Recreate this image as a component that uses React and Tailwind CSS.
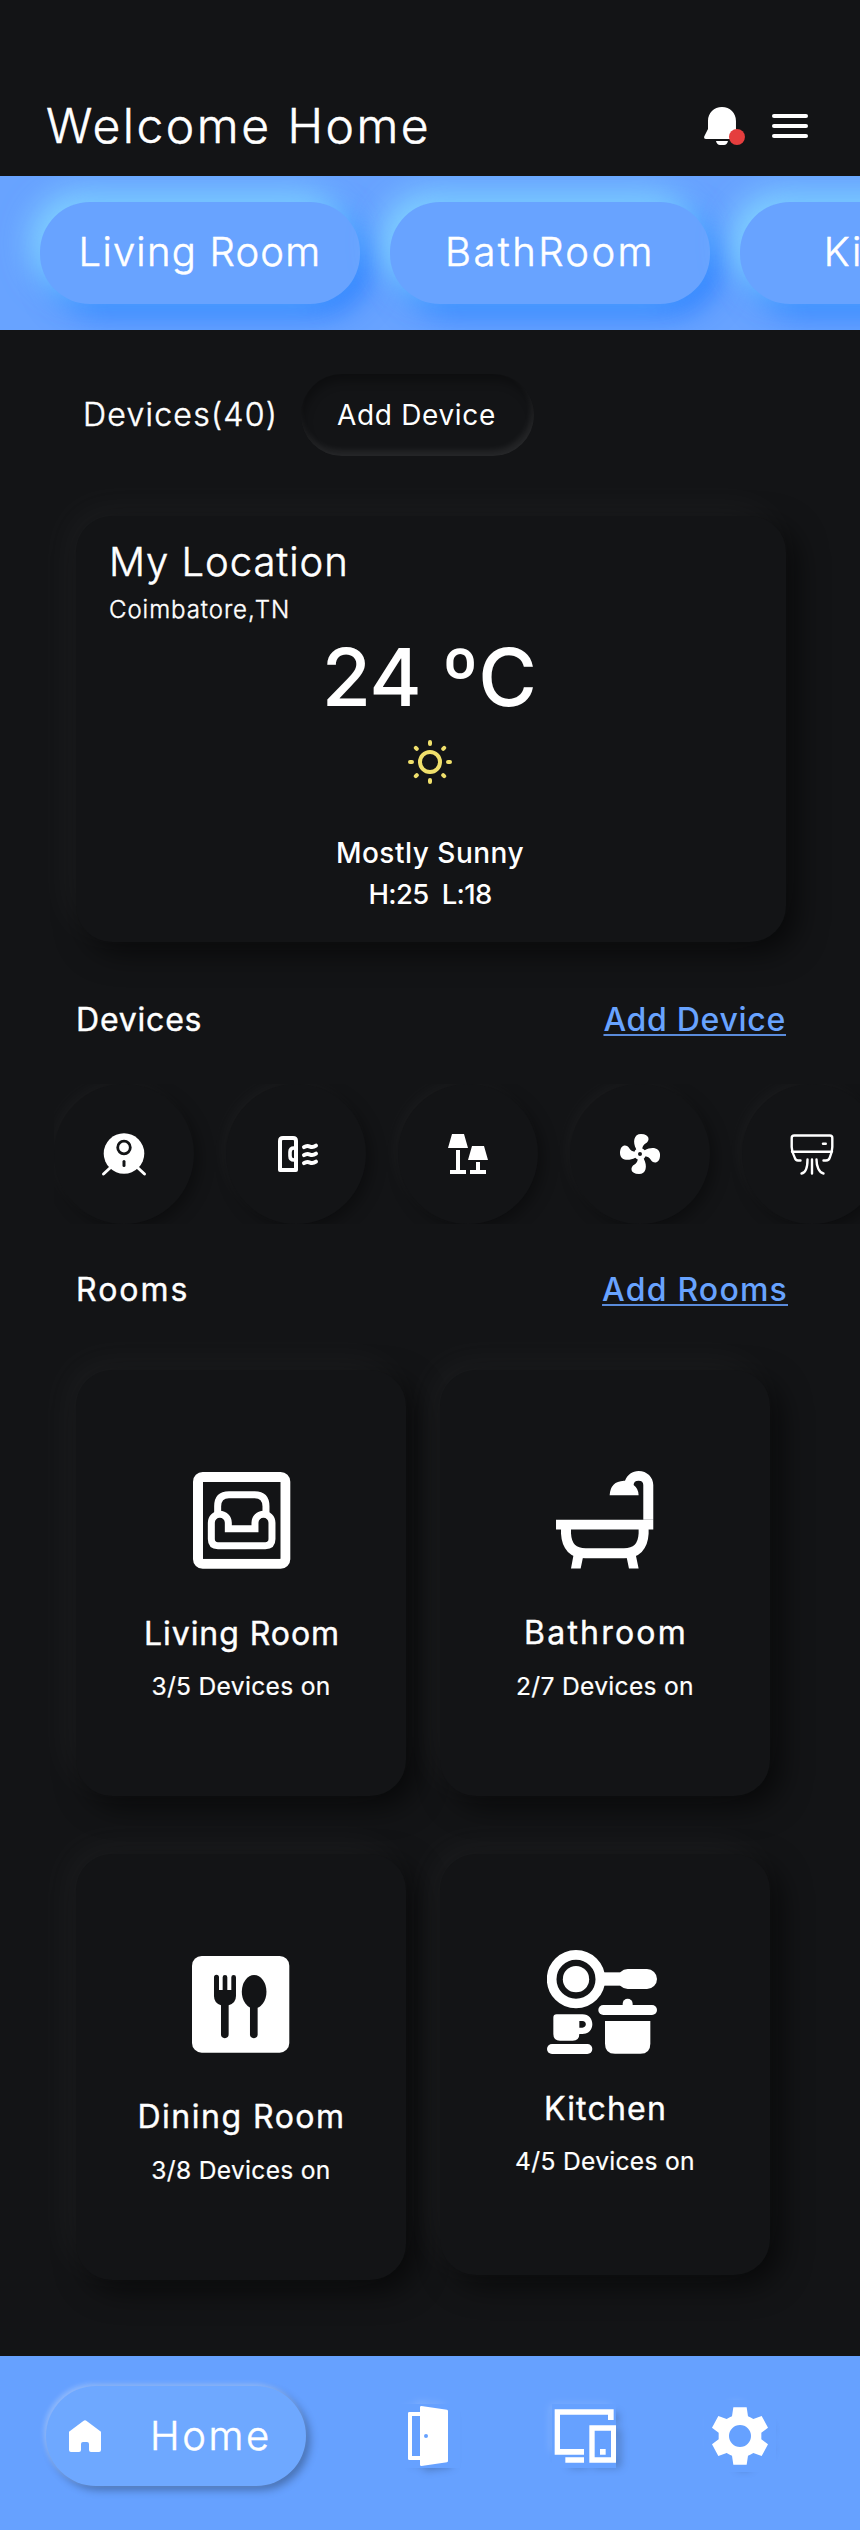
import React from "react";

/* ---------- header icons ---------- */

function BellIcon() {
  return (
    <svg viewBox="132 78 124 114" className="h-[38px] w-[41.3px]" fill="#fff">
      <path d="M186 78c-24 0-42 18-42 42v24l-11 22q-3 8 6 8h94q9 0 6-8l-11-22v-24c0-24-18-42-42-42z" />
      <path d="M168 180h36q-3 12-12 12h-12q-9 0-12-12z" />
      <circle cx="231" cy="168" r="24" fill="#e53e3e" />
    </svg>
  );
}

function MenuIcon() {
  return (
    <svg viewBox="0 0 36 24" className="h-6 w-9" fill="#fff">
      <rect width="36" height="4" rx="2" />
      <rect y="10" width="36" height="4" rx="2" />
      <rect y="20" width="36" height="4" rx="2" />
    </svg>
  );
}

function SunIcon() {
  return (
    <svg viewBox="-24 -24 48 48" className="h-12 w-12" fill="none" stroke="#f0e06c" strokeWidth="4" strokeLinecap="round">
      <circle r="10" />
      <path d="M0-20v2M0 20v-2M-20 0h2M20 0h-2M-14.2-14.2l1 1M14.2-14.2l-1 1M-14.2 14.2l1-1M14.2 14.2l-1-1" />
    </svg>
  );
}

/* ---------- device icons ---------- */

function CameraIcon() {
  return (
    <svg viewBox="0 0 48 48" className="h-12 w-12" fill="#fff">
      <path d="M10 38l-6.500 6M38 38l6.500 6" stroke="#fff" strokeWidth="3" strokeLinecap="round" />
      <circle cx="24" cy="23.500" r="20.300" />
      <circle cx="24" cy="17.500" r="6.300" stroke="#131416" strokeWidth="2.800" />
      <path d="M24 31.500v4" stroke="#131416" strokeWidth="3" strokeLinecap="round" />
    </svg>
  );
}

function HeaterIcon() {
  return (
    <svg viewBox="0 0 48 48" className="h-12 w-12" fill="none" stroke="#fff" strokeWidth="4">
      <path d="M8 40V11q0-3 3-3h10q3 0 3 3v29z" strokeLinejoin="round" />
      <path d="M24 18h-2q-4 0-4 4v4q0 4 4 4h2" strokeWidth="3.600" />
      <path
        d="M32 17.200c2-1.400 4-1.400 6-.6s4 .4 6-1M32 25.200c2-1.400 4-1.400 6-.6s4 .4 6-1M32 33.200c2-1.400 4-1.400 6-.6s4 .4 6-1"
        strokeWidth="4"
        strokeLinecap="round"
      />
    </svg>
  );
}

function LampIcon() {
  return (
    <svg viewBox="0 0 48 48" className="h-12 w-12" fill="#fff">
      <path d="M8 4h12l4 14H4zM12 20h4v20h6v4H6v-4h6zM28 16h12l4 14H24zM32 32h4v8h6v4H26v-4h6z" />
    </svg>
  );
}

function FanIcon() {
  return (
    <svg viewBox="0 0 24 24" className="h-12 w-12" fill="#fff">
      <path d="M12,11A1,1 0 0,0 11,12A1,1 0 0,0 12,13A1,1 0 0,0 13,12A1,1 0 0,0 12,11M12.5,2C17,2 17.11,5.57 14.75,6.75C13.76,7.24 13.32,8.29 13.13,9.22C13.61,9.42 14.03,9.73 14.35,10.13C18.05,8.13 22.03,8.92 22.03,12.5C22.03,17 18.46,17.1 17.28,14.73C16.78,13.74 15.72,13.3 14.79,13.11C14.59,13.59 14.28,14 13.88,14.34C15.87,18.03 15.08,22 11.5,22C7,22 6.91,18.42 9.27,17.24C10.25,16.75 10.69,15.71 10.89,14.79C10.4,14.59 9.97,14.27 9.65,13.87C5.96,15.85 2,15.07 2,11.5C2,7 5.56,6.89 6.74,9.26C7.24,10.25 8.29,10.68 9.22,10.87C9.41,10.39 9.73,9.97 10.14,9.65C8.15,5.96 8.94,2 12.5,2Z" />
    </svg>
  );
}

function AirConditionerIcon() {
  return (
    <svg viewBox="0 0 48 48" className="h-12 w-12" fill="none" stroke="#fff" strokeWidth="2.400" strokeLinecap="round" strokeLinejoin="round">
      <path d="M12.500 30.500H10q-2.500 0-3.300-3Q3.700 22 3.700 17V8q0-2.500 2.500-2.500h35.600q2.500 0 2.500 2.500v9q0 5-2.500 10.500-.8 3-3.800 3h-2.500M4 21.800h40" />
      <path d="M35 13.700h2.800" />
      <path d="M19.500 29.500c0 7-1.500 13.200-6 14M24 29.500v14M28.500 29.500c0 7 2.500 13.200 7 14" />
    </svg>
  );
}

/* ---------- room icons ---------- */

function LivingRoomIcon() {
  return (
    <svg viewBox="460 426 292 291" className="ml-[2px] h-[97px] w-[97.3px]" fill="none" stroke="#fff">
      <rect x="475" y="441" width="262" height="260.500" rx="14" strokeWidth="30" />
      <path d="M490 456h232v230H490z" fill="#131416" stroke="none" />
      <path d="M534 553v-24q0-35 34-35h77q34 0 34 35v24" strokeWidth="21" />
      <path d="M566 596v-18a25.500 25.500 0 0 0-51 0v49q0 20 20 20h142q20 0 20-20v-49a25.500 25.500 0 0 0-51 0v18z" strokeWidth="21" />
    </svg>
  );
}

function BathroomIcon() {
  return (
    <svg viewBox="379 424 292 293" className="h-[97.6px] w-[97.3px]" fill="#fff">
      <path d="M379 570h292v30H379z" />
      <path d="M409 598v14q3 59 59 59h115q56 0 59-59v-14" fill="none" stroke="#fff" strokeWidth="30" />
      <path d="M432 674l-8 43h29l7-34zM618 674l9 43h-29l-7-34z" />
      <path d="M540 497q2-42 43-44h3c8-18 22-29 41-29 25 0 44 19 44 42v104h-30V466q0-13-14-13-15 0-15 13 15 11 15 31z" />
    </svg>
  );
}

function DiningRoomIcon() {
  return (
    <svg viewBox="457 348 292 290" className="h-[96.7px] w-[97.3px]" fill="#131416">
      <rect x="457" y="348" width="292" height="290" rx="29" fill="#fff" />
      <path d="M523 412a7.500 7.500 0 0 1 15 0v38h11v-38a7 7 0 0 1 14 0v38h12v-38a7 7 0 0 1 14 0v56q0 21-22 28v87a11.500 11.500 0 0 1-23 0v-87q-21-7-21-28z" />
      <ellipse cx="643.500" cy="455" rx="37" ry="50" />
      <path d="M631 495h23v88a11.500 11.500 0 0 1-23 0z" />
    </svg>
  );
}

function KitchenIcon() {
  return (
    <svg viewBox="351 330 330 312" className="mr-[6px] h-[104px] w-[110px]" fill="#fff">
      <circle cx="438" cy="417.500" r="73" fill="none" stroke="#fff" strokeWidth="29" />
      <circle cx="438" cy="417.500" r="39.500" />
      <path d="M515 397h70v40h-70z" />
      <rect x="563" y="387" width="118" height="60" rx="30" />
      <path d="M578 500v-9a15 15 0 0 1 30 0v9z" />
      <rect x="505" y="495" width="176" height="30" rx="15" />
      <path d="M525 543h136v68q0 30-30 30h-76q-30 0-30-30z" />
      <path
        fillRule="evenodd"
        d="M380 523h77c40 0 40 59 0 59h-9q0 20-20 20h-38q-20 0-20-20v-49q0-10 10-10zM448 543v20h9c14 0 14-20 0-20z"
      />
      <rect x="351" y="612" width="136" height="30" rx="15" />
    </svg>
  );
}

/* ---------- navigation icons ---------- */

function HomeIcon() {
  return (
    <svg viewBox="207 240 96 96" className="h-8 w-8" fill="#fff">
      <path d="M207 275l43-32q5-4 10 0l43 32v55q0 6-6 6h-24q-6 0-6-6v-18q0-6-6-6h-12q-6 0-6 6v18q0 6-6 6h-24q-6 0-6-6z" />
    </svg>
  );
}

function DoorIcon({ className }) {
  return (
    <svg viewBox="48 192 192 192" className={className} fill="#fff">
      <path fillRule="evenodd" d="M88 216h32v12H96v120h24v12H88q-4 0-4-4V220q0-4 4-4z" />
      <path
        fillRule="evenodd"
        d="M124 198l77 11q3 1 3 4v150q0 3-3 4l-77 11q-4 0-4-4V202q0-4 4-4zM138 282a6 6 0 1 0 0 12 6 6 0 0 0 0-12z"
      />
    </svg>
  );
}

function DevicesIcon({ className }) {
  return (
    <svg viewBox="516 192 192 192" className={className} fill="#fff">
      <path d="M524 208h177v32h-17v-16H540v103h72v17h-88zM556 352h56v16h-56z" />
      <path fillRule="evenodd" d="M628 256h80v112h-80zM644 272v80h49v-80zM660 327h17v17h-17z" />
    </svg>
  );
}

function GearIcon({ className }) {
  return (
    <svg viewBox="972 180 216 216" className={className} fill="#fff">
      <path
        fillRule="evenodd"
        d="M1060 202h40l4 27q8 3 16 8l25-9 19 35-20 15v20l20 15-19 35-25-9q-8 5-16 8l-4 27h-40l-4-27q-8-3-16-8l-25 9-19-35 20-15v-20l-20-15 19-35 25 9q8-5 16-8zM1080 255a33 33 0 1 0 0 66 33 33 0 0 0 0-66z"
      />
    </svg>
  );
}

/* ---------- building blocks ---------- */

function RoomPill({ children }) {
  return (
    <div className="flex h-[102px] w-[320px] shrink-0 items-center justify-center rounded-[50px] bg-[#68a3ff] pb-[2px] text-[40px] font-light [-webkit-text-stroke:0.5px_#fff] shadow-[-10px_-10px_30px_rgba(140,225,255,0.75),10px_10px_30px_rgba(30,120,255,0.85)]">
      {children}
    </div>
  );
}

function DeviceButton({ children }) {
  return (
    <div className="flex h-[140px] w-[140px] shrink-0 items-center justify-center rounded-full bg-[#131416] shadow-[-5px_-5px_15px_rgba(255,255,255,0.03),5px_5px_15px_rgba(0,0,0,0.35)]">
      {children}
    </div>
  );
}

function RoomCard({ className, icon, title, titleClass, status }) {
  return (
    <div
      className={
        "flex w-[330px] flex-col items-center rounded-[36px] bg-[#131416] shadow-[-10px_-10px_40px_rgba(255,255,255,0.045),10px_10px_30px_rgba(0,0,0,0.6)] " +
        className
      }
    >
      {icon}
      <div className={"h-[46px] text-[32px] leading-[46px] [-webkit-text-stroke:0.4px_#fff] " + titleClass}>{title}</div>
      <div className="mt-[11.5px] h-9 text-[24.6px] leading-9 tracking-[0.3px] [-webkit-text-stroke:0.2px_#fff]">{status}</div>
    </div>
  );
}

function NavIcon({ icon: Icon, box, className }) {
  return (
    <div className={"grid " + className}>
      <div className="col-start-1 row-start-1 drop-shadow-[-4px_-4px_4px_rgba(255,255,255,0.2)]">
        <div className="drop-shadow-[4px_4px_4px_rgba(0,0,0,0.3)]">
          <Icon className={box} />
        </div>
      </div>
      <div className="z-10 col-start-1 row-start-1 bg-[#66a1ff]">
        <Icon className={box} />
      </div>
    </div>
  );
}

/* ---------- page ---------- */

export default function App() {
  return (
    <div className="flex h-[2530px] w-[860px] flex-col overflow-hidden bg-[#131416] font-['Inter',sans-serif] text-white">
      <header className="flex h-[176px] items-center pt-[75px] pr-[52px] pl-[46px]">
        <h1 className="mr-auto text-[48px] font-light tracking-[2.5px] whitespace-nowrap [-webkit-text-stroke:0.5px_#fff]">Welcome Home</h1>
        <BellIcon />
        <div className="ml-[26.700px]">
          <MenuIcon />
        </div>
      </header>

      <div className="flex h-[154px] shrink-0 items-center gap-[30px] overflow-hidden bg-[#68a3ff] pl-10">
        <RoomPill>
          <span className="tracking-[1.2px]">Living Room</span>
        </RoomPill>
        <RoomPill>
          <span className="tracking-[2.4px]">BathRoom</span>
        </RoomPill>
        <RoomPill>
          <span className="tracking-[1.8px]">Kitchen</span>
        </RoomPill>
      </div>

      <div className="mt-11 flex h-[82px] items-center pl-[83px]">
        <div className="w-[218px] text-[32px] font-light tracking-[1.25px] [-webkit-text-stroke:0.5px_#fff]">Devices(40)</div>
        <div className="flex h-[82px] w-[233px] items-center justify-center rounded-[41px] pr-0.5 text-[28px] tracking-[0.65px] shadow-[inset_2px_7px_10px_rgba(0,0,0,0.3),inset_-2px_-5px_7px_rgba(255,255,255,0.09)]">
          Add Device
        </div>
      </div>

      <section className="mt-[60px] ml-[76px] flex h-[426px] w-[710px] flex-col items-center rounded-[36px] bg-[#131416] pt-[18px] shadow-[-10px_-10px_40px_rgba(255,255,255,0.045),10px_10px_30px_rgba(0,0,0,0.6)]">
        <div className="h-14 self-start pl-[33px] text-[40px] leading-[56px] font-light tracking-[0.95px] [-webkit-text-stroke:0.5px_#fff]">My Location</div>
        <div className="h-[39px] self-start pl-[33px] text-[24px] leading-[39px] font-light tracking-[0.95px] [-webkit-text-stroke:0.4px_#fff]">Coimbatore,TN</div>
        <div className="h-[95px] pr-[4px] text-[80px] leading-[96px] font-medium tracking-[-0.6px]">24 ºC</div>
        <div className="flex h-[76px] items-center pr-[2px]">
          <SunIcon />
        </div>
        <div className="mt-8 h-[42px] pr-[2px] text-[28px] leading-[42px] font-medium tracking-[0.5px]">Mostly Sunny</div>
        <div className="h-[42px] pr-[2px] text-[27.5px] leading-[40px] font-medium tracking-[-0.7px] whitespace-pre">H:25  L:18</div>
      </section>

      <div className="mt-[57px] flex h-[41px] items-center justify-between pr-[74px] pl-[76px] text-[32px]">
        <h2 className="tracking-[0.8px] [-webkit-text-stroke:0.4px_#fff]">Devices</h2>
        <a className="font-medium tracking-[0.7px] text-[#68a3ff] underline decoration-[#5a8bdb] decoration-2 underline-offset-[3px]">Add Device</a>
      </div>

      <div className="mt-11 ml-[54px] flex h-[140px] shrink-0 gap-8 overflow-hidden">
        <DeviceButton>
          <CameraIcon />
        </DeviceButton>
        <DeviceButton>
          <HeaterIcon />
        </DeviceButton>
        <DeviceButton>
          <LampIcon />
        </DeviceButton>
        <DeviceButton>
          <FanIcon />
        </DeviceButton>
        <DeviceButton>
          <AirConditionerIcon />
        </DeviceButton>
      </div>

      <div className="mt-[45px] flex h-[41px] items-center justify-between pr-[72px] pl-[76px] text-[32px]">
        <h2 className="tracking-[2px] [-webkit-text-stroke:0.4px_#fff]">Rooms</h2>
        <a className="font-medium tracking-[1.2px] text-[#68a3ff] underline decoration-[#5a8bdb] decoration-2 underline-offset-[3px]">Add Rooms</a>
      </div>

      <div className="mt-[60px] ml-[76px] grid w-[694px] grid-cols-[330px_330px] items-start gap-x-[34px] gap-y-[58px]">
        <RoomCard
          className="h-[426px] pt-[102px]"
          icon={<LivingRoomIcon />}
          title="Living Room"
          titleClass="mt-[41.5px] pl-[2px] tracking-[0.95px]"
          status="3/5 Devices on"
        />
        <RoomCard
          className="h-[426px] pt-[101px]"
          icon={<BathroomIcon />}
          title="Bathroom"
          titleClass="mt-[41.5px] pl-[2px] tracking-[2.2px]"
          status="2/7 Devices on"
        />
        <RoomCard
          className="h-[426px] pt-[102px]"
          icon={<DiningRoomIcon />}
          title="Dining Room"
          titleClass="mt-[41.5px] pl-px tracking-[1.5px]"
          status="3/8 Devices on"
        />
        <RoomCard
          className="h-[421px] pt-24"
          icon={<KitchenIcon />}
          title="Kitchen"
          titleClass="mt-[31.5px] pl-px tracking-[1.2px]"
          status="4/5 Devices on"
        />
      </div>

      <nav className="z-10 mt-auto flex h-[174px] shrink-0 items-start bg-[#66a1ff] pt-[30px] pl-[46px]">
        <div className="flex h-[100px] w-[260px] items-center rounded-[50px] bg-[#6ea8ff] pl-[23px] shadow-[-2px_-2px_5px_rgba(255,255,255,0.3),4px_4px_8px_rgba(0,0,0,0.3)]">
          <HomeIcon />
          <span className="ml-[49px] text-[40px] font-light tracking-[2.600px] [-webkit-text-stroke:0.5px_#fff]">Home</span>
        </div>
        <NavIcon icon={DoorIcon} box="h-16 w-16" className="mt-[18px] ml-[90px]" />
        <NavIcon icon={DevicesIcon} box="h-16 w-16" className="mt-[18px] ml-[92px]" />
        <NavIcon icon={GearIcon} box="h-[72px] w-[72px]" className="mt-[14px] ml-[88px]" />
      </nav>
    </div>
  );
}
